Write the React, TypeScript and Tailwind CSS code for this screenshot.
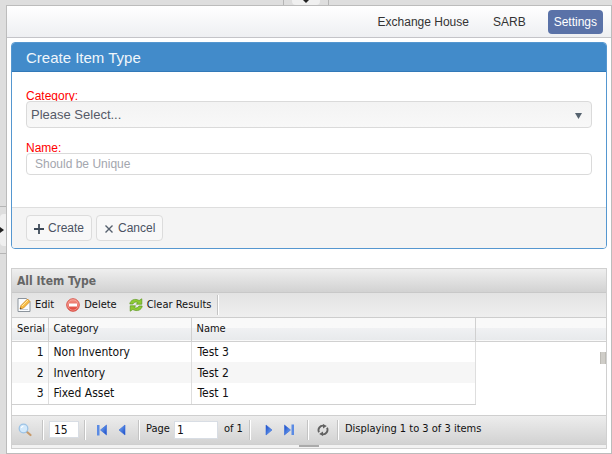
import type { ReactNode } from 'react';

const rows = [
  { serial: 1, category: 'Non Inventory', name: 'Test 3' },
  { serial: 2, category: 'Inventory', name: 'Test 2' },
  { serial: 3, category: 'Fixed Asset', name: 'Test 1' },
];

function Separator() {
  return <span className="h-5 w-0.5 shrink-0 border-l border-[#c4c4c4] bg-white" />;
}

function EditIcon() {
  return (
    <svg width="14" height="16" viewBox="0 0 14 16" aria-hidden="true">
      <path d="M1 1.5h8.5L13 5v9.5H1z" fill="#fafcfe" stroke="#8c949c" />
      <path d="M3 12.5h8" stroke="#c7ced6" />
      <path d="M3 12l1-3.5L10.5 2 13 4.500 6.500 11z" fill="#f8bd45" stroke="#cf8522" strokeWidth=".8" />
      <path d="M5 9l6-6" stroke="#ffe9a2" />
      <path d="M3 12l.4-1.500 1.200 1z" fill="#333" />
    </svg>
  );
}

function DeleteIcon() {
  return (
    <svg width="14" height="14" viewBox="0 0 14 14" aria-hidden="true">
      <defs>
        <linearGradient id="red" x1="0" y1="0" x2="0" y2="1">
          <stop offset="0" stopColor="#f59a8c" />
          <stop offset="1" stopColor="#dd3a30" />
        </linearGradient>
      </defs>
      <circle cx="7" cy="7" r="6.300" fill="url(#red)" stroke="#d9594f" />
      <circle cx="7" cy="7" r="5.200" fill="none" stroke="#f7aaa2" strokeWidth=".7" />
      <rect x="3" y="5.500" width="8" height="3" fill="#fff" />
    </svg>
  );
}

function ClearIcon() {
  return (
    <svg width="14" height="14" viewBox="0 0 14 14" aria-hidden="true">
      <g fill="#8ecb33" stroke="#5c9a1c" strokeWidth=".7" strokeLinejoin="round">
        <path d="M.8 6C1.300 2 6 0 10.200 2.500L12.800.8v5.400H7.400L8.800 4.600C6.800 3.500 4.800 4 4 6z" />
        <path d="M13.200 8C12.700 12 8 14 3.800 11.500L1.200 13.200V7.800h5.400L5.200 9.400c2 1.100 4 .6 4.800-1.400z" />
      </g>
    </svg>
  );
}

function SearchIcon() {
  return (
    <svg width="14" height="14" viewBox="0 0 14 14" aria-hidden="true">
      <path d="M8.500 8.500l4 3.500" stroke="#c79a6b" strokeWidth="2.200" strokeLinecap="round" />
      <circle cx="5.500" cy="5.500" r="4.300" fill="#d3e9fb" stroke="#9cc3e6" strokeWidth="1.300" />
      <path d="M3.500 5a2.200 2.200 0 0 1 2-2" fill="none" stroke="#fff" strokeWidth="1.200" />
    </svg>
  );
}

function ArrowIcon({ forward = false, bar = false }: { forward?: boolean; bar?: boolean }) {
  return (
    <svg
      width="12"
      height="12"
      viewBox="0 0 12 12"
      className={forward ? 'rotate-180' : ''}
      aria-hidden="true"
    >
      <defs>
        <linearGradient id="blue" x1="0" y1="0" x2="1" y2="1">
          <stop offset="0" stopColor="#7eb3fa" />
          <stop offset="1" stopColor="#1646c4" />
        </linearGradient>
      </defs>
      {bar && <rect x="1" y="1" width="2.500" height="10.500" fill="#5b8be4" />}
      <path d={bar ? 'M10.500 1v10L4.500 6z' : 'M9 1v10L3 6z'} fill="url(#blue)" stroke="#3468d6" strokeWidth=".6" />
    </svg>
  );
}

function RefreshIcon() {
  return (
    <svg width="12" height="12" viewBox="0 0 12 12" aria-hidden="true">
      <g fill="none" stroke="#616161" strokeWidth="1.900">
        <path d="M2 8.200A4.500 4.500 0 0 1 6.500 1.700" />
        <path d="M10 3.800a4.500 4.500 0 0 1-4.500 6.500" />
      </g>
      <path d="M6 0l3.800 2L6 4.500zM6 12L2.200 10 6 7.500z" fill="#616161" />
    </svg>
  );
}

function IconButton({ label, children }: { label: string; children: ReactNode }) {
  return (
    <button type="button" aria-label={label} className="flex shrink-0 items-center justify-center">
      {children}
    </button>
  );
}

function ItemForm() {
  return (
    <form className="overflow-hidden rounded border border-[#5597d0] bg-white">
      <h1 className="h-[29px] border-b border-[#3279b8] bg-[#428bca] pl-3.5 text-[15px] leading-[30px] text-[#f0f6fb]">
        Create Item Type
      </h1>
      <div className="px-3.5 pt-4 pb-8 text-xs text-[#555a68]">
        <label htmlFor="category" className="block h-[13px] leading-4 text-[#f00]">
          Category:
        </label>
        <div className="relative">
          <select
            id="category"
            className="block h-[27px] w-full appearance-none rounded border border-[#dadada] bg-[#f5f5f5] bg-linear-to-b from-[#f3f3f3] to-[#f8f8f8] px-1 text-[13px]"
          >
            <option>Please Select...</option>
          </select>
          <svg
            width="7"
            height="6"
            viewBox="0 0 7 6"
            className="pointer-events-none absolute top-3 right-2.5"
            aria-hidden="true"
          >
            <path d="M0 0h7L3.500 6z" fill="#56636f" />
          </svg>
        </div>
        <label htmlFor="name" className="mt-3 block h-[13px] leading-4 text-[#f00]">
          Name:
        </label>
        <input
          id="name"
          placeholder="Should be Unique"
          className="relative block h-[22px] w-full rounded border border-[#dadada] bg-white px-2 text-xs placeholder:text-[#a3a6ae]"
        />
      </div>
      <div className="flex gap-1 border-t border-[#dedede] bg-[#f4f4f4] px-3.5 py-[7px] text-xs text-[#4b5363]">
        <button
          type="button"
          className="flex h-[26px] items-center gap-1 rounded border border-[#dcdcdc] bg-[#f8f8f8] px-[7px]"
        >
          <svg width="10" height="10" viewBox="0 0 10 10" className="mt-0.5" aria-hidden="true">
            <path d="M5 0v10M0 5h10" stroke="#3e4a58" strokeWidth="1.800" />
          </svg>
          Create
        </button>
        <button
          type="button"
          className="flex h-[26px] items-center gap-1 rounded border border-[#dcdcdc] bg-[#f8f8f8] px-[7px]"
        >
          <svg width="10" height="10" viewBox="0 0 10 10" className="mt-0.5" aria-hidden="true">
            <path d="M1.500 1.500l7 7M8.500 1.500l-7 7" stroke="#56616e" strokeWidth="1.400" />
          </svg>
          Cancel
        </button>
      </div>
    </form>
  );
}

function ItemGrid() {
  return (
    <section className="border border-[#d0d0d0] bg-white font-['DejaVu_Sans_Condensed','DejaVu_Sans',sans-serif] text-[11px] text-[#111]">
      <h2 className="h-6 border-b border-[#c8c8c8] bg-linear-to-b from-[#efefef] to-[#d2d2d2] pl-[5px] text-xs leading-6 font-bold text-[#666]">
        All Item Type
      </h2>
      <div className="flex h-[25px] items-center border-b border-[#cdcdcd] bg-linear-to-b from-[#e3e3e3] to-[#efefef] pl-[5px]">
        <div className="mr-1.5 flex gap-3">
          <button type="button" className="flex items-center gap-1">
            <EditIcon />
            Edit
          </button>
          <button type="button" className="flex items-center gap-1">
            <DeleteIcon />
            Delete
          </button>
          <button type="button" className="flex items-center gap-1">
            <ClearIcon />
            Clear Results
          </button>
        </div>
        <Separator />
      </div>
      <div className="relative pb-2.5">
        <table className="w-full table-fixed border-collapse leading-5">
          <colgroup>
            <col className="w-9" />
            <col className="w-[143px]" />
            <col className="w-[284px]" />
            <col />
          </colgroup>
          <thead>
            <tr className="h-[23px] border-b border-[#d0d0d0] bg-linear-to-b from-[#f9f9f9] from-45% via-[#f0f1f3] via-45% to-[#e8eaec] text-left">
              <th className="border-r border-[#d0d0d0] pl-[5px] font-normal">Serial</th>
              <th className="border-r border-[#d0d0d0] pl-[5px] font-normal">Category</th>
              <th className="border-r border-[#d0d0d0] pl-[5px] font-normal">Name</th>
              <th className="p-0" />
            </tr>
          </thead>
          <tbody className="text-xs leading-5">
            {rows.map((row) => (
              <tr key={row.serial} className="group h-[21px]">
                <td className="border-r border-[#dedede] pr-1 text-right group-last:border-b group-last:border-b-[#d0d0d0] group-even:bg-[#f6f6f6]">
                  {row.serial}
                </td>
                <td className="border-r border-[#dedede] pl-[5px] group-last:border-b group-last:border-b-[#d0d0d0] group-even:bg-[#f6f6f6]">
                  {row.category}
                </td>
                <td className="border-r border-[#dedede] pl-1.5 group-last:border-b group-last:border-b-[#d0d0d0] group-even:bg-[#f6f6f6]">
                  {row.name}
                </td>
                <td className="p-0" />
              </tr>
            ))}
          </tbody>
        </table>
        <span className="absolute top-[34px] right-0 h-3 w-1.5 border-x border-[#bdbbb5] bg-[#cfcdc8]" />
      </div>
      <div className="flex h-[30px] items-center border-y border-[#cfcfcf] bg-linear-to-b from-[#ededed] to-[#d2d2d2] pl-1.5">
        <IconButton label="Search">
          <SearchIcon />
        </IconButton>
        <span className="ml-2.5 flex">
          <Separator />
        </span>
        <input
          aria-label="Rows per page"
          defaultValue="15"
          className="mx-[5px] h-[17px] w-[30px] border border-[#d8dde4] bg-white px-1 text-xs"
        />
        <Separator />
        <div className="mx-2.5 flex gap-2">
          <IconButton label="First page">
            <ArrowIcon bar />
          </IconButton>
          <IconButton label="Previous page">
            <ArrowIcon />
          </IconButton>
        </div>
        <Separator />
        <label className="mr-1.5 ml-1.5 flex items-center gap-1">
          Page
          <input
            defaultValue="1"
            className="h-[18px] w-11 border border-[#d8dde4] bg-white px-0.5 text-xs"
          />
          <span className="ml-0.5">of 1</span>
        </label>
        <Separator />
        <div className="mx-3 flex gap-2">
          <IconButton label="Next page">
            <ArrowIcon forward />
          </IconButton>
          <IconButton label="Last page">
            <ArrowIcon forward bar />
          </IconButton>
        </div>
        <Separator />
        <div className="mx-2 flex">
          <IconButton label="Refresh">
            <RefreshIcon />
          </IconButton>
        </div>
        <Separator />
        <span className="ml-1.5 whitespace-nowrap">Displaying 1 to 3 of 3 items</span>
      </div>
      <div className="flex h-[3px] justify-center bg-[#f2f2f2]">
        <span className="h-0.5 w-5 bg-[#aaa]" />
      </div>
    </section>
  );
}

export default function App() {
  return (
    <div className="flex min-h-screen flex-col bg-[#dedede] font-['Liberation_Sans',Arial,sans-serif]">
      <div className="flex h-[5px] justify-center">
        <div className="flex w-[46px] justify-center border-x border-[#b5b5b5] px-2">
          <span className="flex w-full justify-center rounded-b bg-[#f0f0f0]">
            <svg width="6" height="3" viewBox="0 0 6 3" aria-hidden="true">
              <path d="M0 0h6L3 3z" fill="#222" />
            </svg>
          </span>
        </div>
      </div>
      <div className="flex flex-1">
        <div className="flex w-[6px] flex-col justify-center">
          <div className="flex h-12 items-center border-y border-[#b5b5b5]">
            <span className="flex h-8 w-full items-center rounded-l bg-[#f0f0f0]">
              <svg width="4" height="6" viewBox="0 0 4 6" aria-hidden="true">
                <path d="M0 0l4 3-4 3z" fill="#222" />
              </svg>
            </span>
          </div>
        </div>
        <main className="min-w-0 flex-1 border border-[#bcbcbc] bg-white">
          <nav className="flex h-8 items-center justify-end border-b border-[#c4c4c8] bg-linear-to-b from-white to-[#eeeff2] pr-2 text-xs text-[#333]">
            <a href="#exchange" className="px-3">
              Exchange House
            </a>
            <a href="#sarb" className="px-3">
              SARB
            </a>
            <a href="#settings" className="ml-2.5 rounded bg-[#5a72a8] px-1.5 py-1 text-white">
              Settings
            </a>
          </nav>
          <div className="flex flex-col gap-[19px] px-1 pt-1 pb-0.5">
            <ItemForm />
            <ItemGrid />
          </div>
        </main>
      </div>
    </div>
  );
}
